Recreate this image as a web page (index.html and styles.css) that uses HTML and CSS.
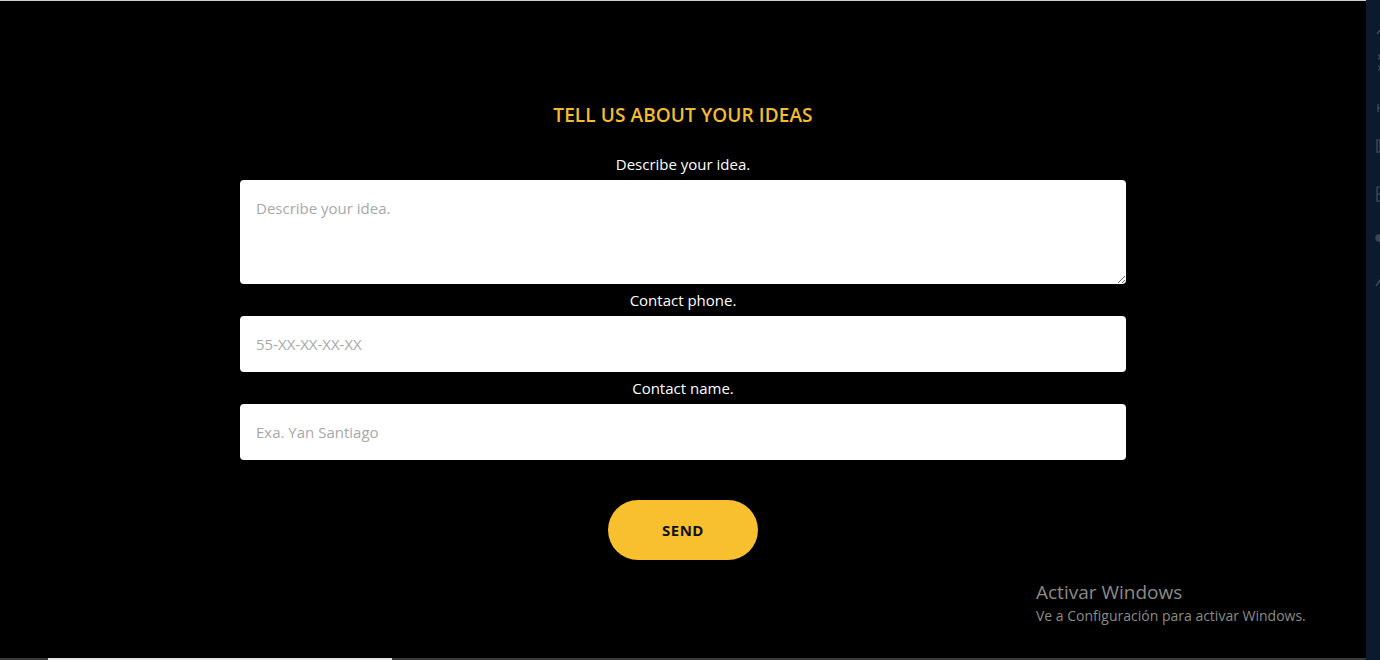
FILE: index.html
```html
<!DOCTYPE html>
<html lang="en">
<head>
<meta charset="utf-8">
<title>Tell us about your ideas</title>
<link rel="stylesheet" href="styles.css">
</head>
<body>
<div class="screen">
  <main class="page">
    <section class="ideas">
      <h1 class="ideas-title">TELL US ABOUT YOUR IDEAS</h1>
      <form class="ideas-form">
        <label class="field-label" for="idea">Describe your idea.</label>
        <textarea id="idea" class="field field-area" placeholder="Describe your idea."></textarea>
        <label class="field-label" for="phone">Contact phone.</label>
        <input id="phone" class="field field-input" type="text" placeholder="55-XX-XX-XX-XX">
        <label class="field-label" for="name">Contact name.</label>
        <input id="name" class="field field-input" type="text" placeholder="Exa. Yan Santiago">
        <button type="button" class="send-btn">SEND</button>
      </form>
    </section>
    <div class="taskbar"><span class="taskbar-item"></span></div>
    <div class="watermark">
      <div class="watermark-title">Activar Windows</div>
      <div class="watermark-sub">Ve a Configuración para activar Windows.</div>
    </div>
  </main>
  <aside class="side-strip">
    <svg class="side-icon" width="14" height="300" viewBox="0 0 14 300" aria-hidden="true">
      <g fill="none" stroke="#3b4656" stroke-width="1.5">
        <path d="M11 34 L14 30"/>
        <path d="M12 55 a2 2 0 1 1 0 4"/>
        <path d="M12 66 a2 2 0 1 1 0 4"/>
        <path d="M11 108 h3 M12 104 v8"/>
        <path d="M11 140 h3 v12 h-3 z"/>
        <path d="M11 187 h3 M11 187 v14 h3 M11 194 h3"/>
        <circle cx="13" cy="238" r="3" fill="#3b4656"/>
        <path d="M10 286 L14 280"/>
      </g>
      <path d="M14 312 a6 8 0 0 0 0 16" fill="none" stroke="#3b4656" stroke-width="1.2"/>
    </svg>
  </aside>
</div>
</body>
</html>
```

FILE: styles.css
```css
* { box-sizing: border-box; }

html, body {
  margin: 0;
  padding: 0;
  background: #000;
  height: 660px;
  overflow: hidden;
}

.screen {
  display: flex;
  height: 660px;
}

.page {
  position: relative;
  width: 1366px;
  height: 660px;
  border-top: 1px solid #cfcfcf;
  background: #000;
  display: flex;
  flex-direction: column;
  font-family: "Open Sans", "Noto Sans", sans-serif;
}

.ideas {
  flex: 1;
  display: flex;
  flex-direction: column;
  align-items: center;
  padding-top: 102px;
}

.ideas-title {
  margin: 0;
  font-size: 19px;
  line-height: 24px;
  font-weight: 600;
  color: #f6bc2f;
  letter-spacing: 0.1px;
}

.ideas-form {
  width: 886px;
  display: flex;
  flex-direction: column;
  align-items: center;
  margin-top: 27px;
}

.field-label {
  color: #fff;
  font-size: 15px;
  line-height: 20px;
  margin: 6px 0;
}

.ideas-form .field-label:first-child { margin-top: 0; }

.field {
  width: 100%;
  border: none;
  border-radius: 4px;
  background: #fff;
  font-family: "Open Sans", "Noto Sans", sans-serif;
  font-size: 15px;
  color: #333;
  padding: 0 16px;
  outline: none;
}

.field::placeholder { color: #a8a8a8; }

.field-area {
  height: 104px;
  padding-top: 18px;
  resize: vertical;
  display: block;
}

.field-input {
  height: 56px;
}

.send-btn {
  margin-top: 40px;
  width: 150px;
  height: 60px;
  border: none;
  border-radius: 30px;
  background: #f8bf2e;
  color: #111;
  font-family: "Open Sans", "Noto Sans", sans-serif;
  font-weight: 700;
  font-size: 15px;
  letter-spacing: 0.5px;
}

.taskbar {
  height: 2px;
  background: #3a3a3a;
  padding-left: 48px;
  display: flex;
}

.taskbar-item {
  width: 344px;
  background: #e6e6e6;
}

.watermark {
  position: absolute;
  left: 1036px;
  top: 578px;
  color: #8b8b85;
  font-family: "Open Sans", "Noto Sans", sans-serif;
}

.watermark-title {
  font-size: 19px;
  line-height: 26px;
}

.watermark-sub {
  font-size: 14px;
  line-height: 20px;
  margin-top: 1px;
}

.side-strip {
  width: 14px;
  height: 660px;
  background: #0b1a2c;
  overflow: hidden;
}

.side-icon {
  display: block;
}
```
